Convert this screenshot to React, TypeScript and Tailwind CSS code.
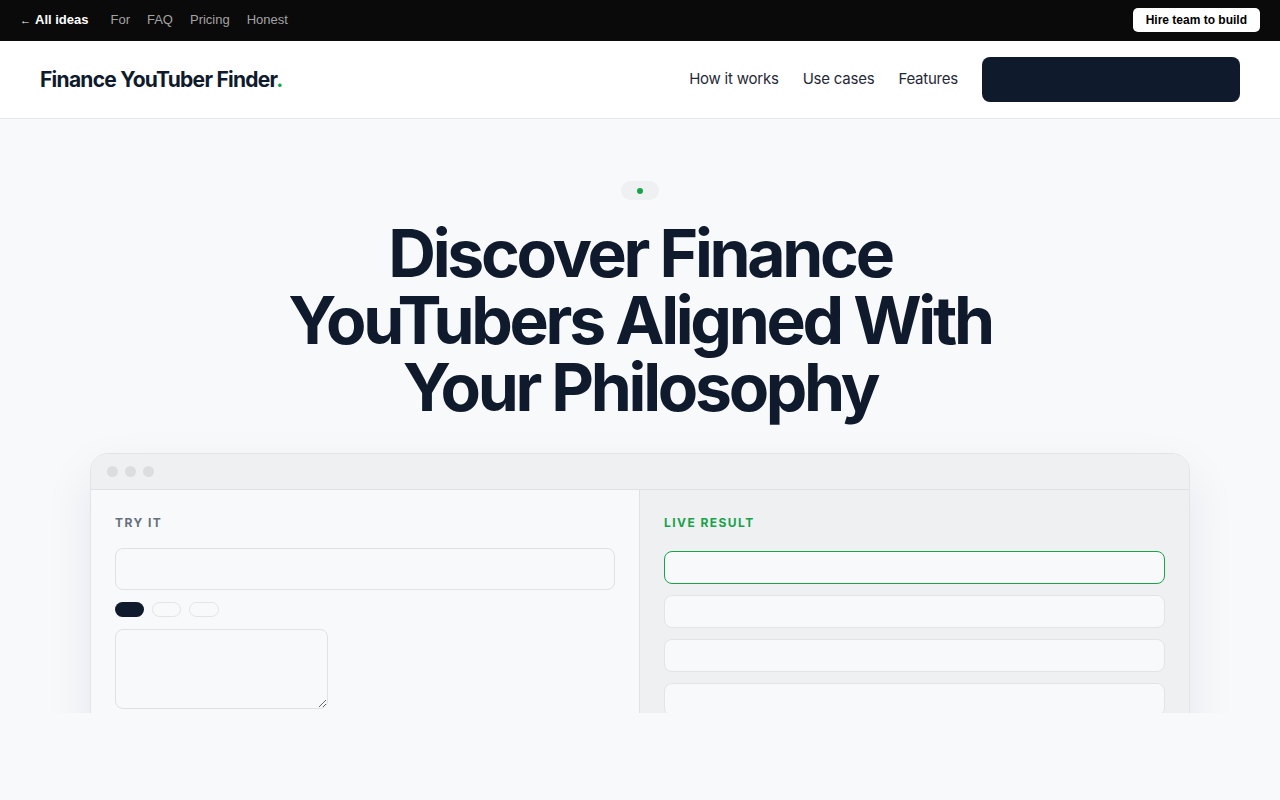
import { ReactNode } from 'react';

const sans = "font-['Inter','Liberation_Sans',sans-serif]";

function TopBar() {
  return (
    <div className="h-[41px] pb-[2px] bg-[#0a0a0a] flex items-center justify-between px-5 font-['Liberation_Sans',Arial,sans-serif] text-[13px]">
      <div className="flex items-center gap-[17px]">
        <a className="text-white font-bold mr-[5px]">
          <span className="font-normal text-[11px] mr-1">←</span>All ideas
        </a>
        <a className="text-[#a3a3a3]">For</a>
        <a className="text-[#a3a3a3]">FAQ</a>
        <a className="text-[#a3a3a3]">Pricing</a>
        <a className="text-[#a3a3a3]">Honest</a>
      </div>
      <button className="bg-white text-black font-bold text-[12px] rounded-[5px] h-6 px-[13px]">
        Hire team to build
      </button>
    </div>
  );
}

function Header() {
  return (
    <header className={`h-[78px] bg-white border-b border-[#e5e7eb] flex items-center justify-between pl-10 pr-10 ${sans}`}>
      <div className="text-[21px] font-bold tracking-[-0.035em] text-[#0f1b2d]">
        Finance YouTuber Finder<span className="text-[#16a34a]">.</span>
      </div>
      <nav className="flex items-center gap-6 text-[15px] text-[#1f2937] tracking-[-0.015em]">
        <a>How it works</a>
        <a>Use cases</a>
        <a>Features</a>
        <button className="w-[258px] h-[45px] rounded-lg bg-[#0f1b2d] text-[#0f1b2d] text-[15px] font-semibold">
          Get started free
        </button>
      </nav>
    </header>
  );
}

function Label({ children, green }: { children: ReactNode; green?: boolean }) {
  return (
    <div
      className={`text-[12px] leading-[18px] font-bold tracking-[0.12em] uppercase ${
        green ? 'text-[#16a34a]' : 'text-[#64707d]'
      }`}
    >
      {children}
    </div>
  );
}

function Mockup() {
  return (
    <div className="w-[1100px] mx-auto rounded-[18px] border border-[#e2e4e8] bg-[#f8f9fb] shadow-[0_20px_50px_rgba(15,27,45,0.08)] overflow-hidden">
      {/* window chrome */}
      <div className="h-[36px] bg-[#eff0f2] border-b border-[#dfe1e4] flex items-center gap-[7px] pl-4">
        <span className="w-[11px] h-[11px] rounded-full bg-[#dcdde0]" />
        <span className="w-[11px] h-[11px] rounded-full bg-[#dcdde0]" />
        <span className="w-[11px] h-[11px] rounded-full bg-[#dcdde0]" />
      </div>
      <div className="grid grid-cols-[548px_1fr] h-[300px]">
        {/* input side */}
        <div className="px-6 pt-6">
          <Label>Try it</Label>
          <div className="mt-4 h-[42px] rounded-lg border border-[#dfe1e5] bg-[#f8f9fb]" />
          <div className="flex gap-2 mt-3">
            <span className="w-[29px] h-[15px] rounded-full bg-[#0f1b2d]" />
            <span className="w-[29px] h-[15px] rounded-full border border-[#e2e4e8]" />
            <span className="w-[30px] h-[15px] rounded-full border border-[#e2e4e8]" />
          </div>
          <textarea className="mt-3 block w-[213px] h-[80px] rounded-lg border border-[#dfe1e5] bg-[#f8f9fb]" />
        </div>
        {/* result side */}
        <div className="bg-[#eff0f2] border-l border-[#dfe1e4] px-6 pt-6">
          <Label green>Live result</Label>
          <div className="mt-[19px] flex flex-col gap-[11px]">
            <div className="h-[33px] rounded-lg border border-[#16a34a] bg-[#f8f9fb]" />
            <div className="h-[33px] rounded-lg border border-[#e2e4e8] bg-[#f8f9fb]" />
            <div className="h-[33px] rounded-lg border border-[#e2e4e8] bg-[#f8f9fb]" />
            <div className="h-[33px] rounded-lg border border-[#e2e4e8] bg-[#f8f9fb]" />
          </div>
        </div>
      </div>
    </div>
  );
}

export default function App() {
  return (
    <div className="min-h-screen bg-[#f8f9fb]">
      <TopBar />
      <Header />
      <section className={`h-[594px] overflow-hidden pt-[62px] ${sans}`}>
        <div className="flex justify-center">
          <span className="w-[38px] h-[19px] rounded-full bg-[#eef0f2] flex items-center justify-center">
            <span className="w-[6px] h-[6px] rounded-full bg-[#16a34a]" />
          </span>
        </div>
        <h1 className="mt-[20px] text-center text-[66px] leading-[67px] font-bold tracking-[-0.05em] text-[#0f1b2d]">
          Discover Finance
          <br />
          YouTubers Aligned With
          <br />
          Your Philosophy
        </h1>
        <div className="mt-[32px]">
          <Mockup />
        </div>
      </section>
    </div>
  );
}
